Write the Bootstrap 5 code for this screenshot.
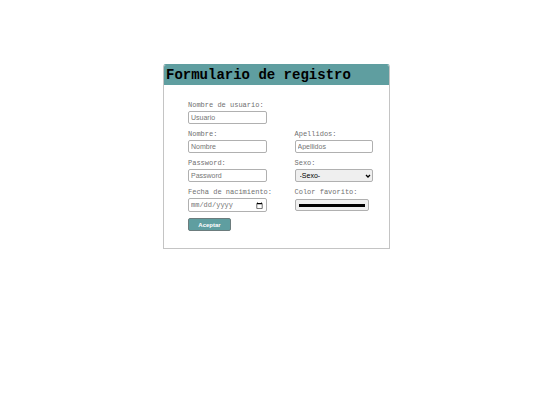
<!DOCTYPE html>
<html lang="es">
<head>
<meta charset="utf-8">
<meta name="viewport" content="width=device-width, initial-scale=1">
<title>Formulario de registro</title>
<link rel="stylesheet" href="https://cdn.jsdelivr.net/npm/bootstrap@5.3.0/dist/css/bootstrap.min.css">
<style>
body { padding-left: 13px; font-family: "Liberation Mono", monospace; font-size: 7px; line-height: 8px; background: #fff; }
.signup { width: 42%; min-width: 227px; margin-top: 64px; border: 1px solid #c4c4c4; border-top-color: #5f9ea0; border-radius: 3px 3px 0 0; }
.signup-title { background: #5f9ea0; color: #000; font-size: 14px; line-height: 20px; font-weight: 700; padding-left: 2px; border-radius: 2px 2px 0 0; }
.signup-body { padding: 16px 16px 17px 24px; }
.fields { display: grid; grid-template-columns: repeat(2, minmax(0, 1fr)); column-gap: 28px; row-gap: 6px; }
.fields label { color: #707070; white-space: nowrap; margin-bottom: 2px; }
.field-box { display: block; width: 100%; height: 13px; padding: 0 2px; border: 1px solid #b0b0b0; border-radius: 2px; background: #fff; color: #222; font: 7px/11px "Liberation Sans", sans-serif; }
.field-box::placeholder { color: #757575; opacity: 1; }
select.field-box { appearance: none; padding: 0 4px; color: #000; background: #efefef url("data:image/svg+xml,%3Csvg xmlns='http://www.w3.org/2000/svg' viewBox='0 0 6 4'%3E%3Cpath d='M1 1l2 2 2-2' fill='none' stroke='%23000' stroke-width='1.3'/%3E%3C/svg%3E") no-repeat right 1px center / 6px 4px; }
.date-box { height: 14px; font-family: "Liberation Mono", monospace; color: #757575; }
.date-box::-webkit-datetime-edit { padding: 0; }
.date-box::-webkit-datetime-edit-fields-wrapper { padding: 0; }
.date-box::-webkit-calendar-picker-indicator { margin: 0; padding: 1px; }
.color-box { width: 74px; height: 12px; margin-top: 3px; background: #efefef; padding: 0; }
.color-box::-webkit-color-swatch-wrapper { padding: 4px 3px 3px; }
.color-box::-webkit-color-swatch { border: 1px solid #000; border-radius: 0; }
.accept { width: 43px; height: 13px; margin-top: 6px; padding: 0; font: 700 6px/10px "Liberation Sans", sans-serif; color: #fff; background: #5f9ea0; border: 1px solid #6c7c7d; border-radius: 2px; }
.accept:hover { color: #fff; background: #4f8e90; }
</style>
</head>
<body>
<main class="signup mx-auto">
  <h1 class="signup-title mb-0">Formulario de registro</h1>
  <form class="signup-body">
    <div class="fields">
      <div><label class="d-block" for="usuario">Nombre de usuario:</label><input class="field-box" id="usuario" type="text" placeholder="Usuario"></div>
      <div></div>
      <div><label class="d-block" for="nombre">Nombre:</label><input class="field-box" id="nombre" type="text" placeholder="Nombre"></div>
      <div><label class="d-block" for="apellidos">Apellidos:</label><input class="field-box" id="apellidos" type="text" placeholder="Apellidos"></div>
      <div><label class="d-block" for="clave">Password:</label><input class="field-box" id="clave" type="password" placeholder="Password"></div>
      <div><label class="d-block" for="sexo">Sexo:</label><select class="field-box" id="sexo"><option>-Sexo-</option><option>Mujer</option><option>Hombre</option></select></div>
      <div><label class="d-block" for="fecha">Fecha de nacimiento:</label><input class="field-box date-box" id="fecha" type="date"></div>
      <div><label class="d-block" for="color">Color favorito:</label><input class="field-box color-box" id="color" type="color" value="#000000"></div>
    </div>
    <button class="btn accept d-block" type="submit">Aceptar</button>
  </form>
</main>
<script src="https://cdn.jsdelivr.net/npm/bootstrap@5.3.0/dist/js/bootstrap.bundle.min.js"></script>
</body>
</html>
